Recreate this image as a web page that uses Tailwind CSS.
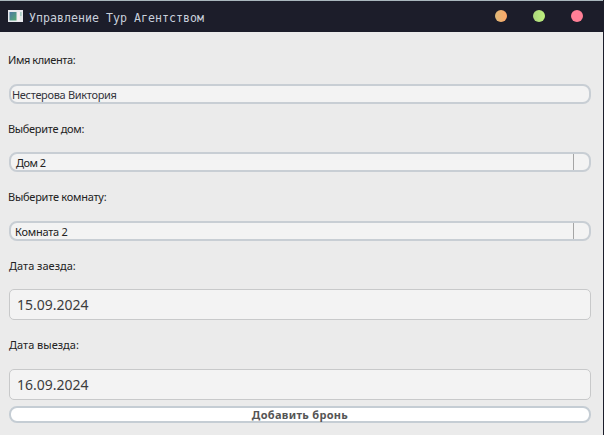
<!DOCTYPE html>
<html lang="ru">
<head>
<meta charset="utf-8">
<title>Управление Тур Агентством</title>
<script src="https://cdn.jsdelivr.net/npm/@tailwindcss/browser@4"></script>
</head>
<body class="w-[604px] h-[435px] overflow-hidden flex bg-[#1c1d2a]">
<div class="w-[603px] h-[435px] flex flex-col bg-[#ebebeb] font-['Noto_Sans',sans-serif] text-[11px] text-[#222]">
  <header class="h-8 shrink-0 flex items-center bg-[#1c1d2a] border-t border-[#a9b7bd] pl-2 pr-5">
    <svg width="15" height="12" viewBox="0 0 15 12" class="shrink-0 -mt-0.5">
      <defs><linearGradient id="g" x1="0" y1="0" x2="1" y2="1"><stop offset="0" stop-color="#4c78a4"/><stop offset="1" stop-color="#55aa72"/></linearGradient></defs>
      <rect width="15" height="12" fill="#e9e9ee"/>
      <rect x="1.5" y="2" width="7" height="8.5" fill="url(#g)"/>
      <rect x="9.5" y="2" width="2" height="9" fill="#f7eef0"/>
      <rect x="12" y="2" width="1.7" height="4" fill="#a9cdc5"/>
      <rect x="12" y="6" width="1.7" height="4" fill="#dce7e4"/>
    </svg>
    <h1 class="ml-1.5 mt-[3px] whitespace-nowrap font-['DejaVu_Sans_Mono',monospace] text-[11.6px] leading-4 tracking-[0.02px] text-[#c9d0dc]">Управление Тур Агентством</h1>
    <div class="ml-auto -mt-0.5 flex gap-[26px]">
      <i class="size-3 rounded-full bg-linear-to-r from-[#dcb878] to-[#ffa768]"></i>
      <i class="size-3 rounded-full bg-linear-to-r from-[#acd67c] to-[#bdf17d]"></i>
      <i class="size-3 rounded-full bg-[#ff7f96]"></i>
    </div>
  </header>
  <main class="flex flex-col pl-[9px] pr-3 pt-5">
    <label class="-ml-px h-4 leading-4 tracking-[-0.4px] whitespace-nowrap">Имя клиента:</label>
    <div class="mt-4 h-5 rounded-[8px] border-2 border-[#c8ced4] bg-[#f3f3f3] pl-px leading-[18px] tracking-[-0.32px] text-[#34343c] whitespace-nowrap">Нестерова Виктория</div>
    <label class="-ml-px mt-[17px] h-4 leading-4 tracking-[-0.32px] whitespace-nowrap">Выберите дом:</label>
    <div class="mt-[15px] h-5 rounded-[8px] border-2 border-[#c8ced4] bg-[#f3f3f3] flex justify-between pl-[5px] pr-[15px]">
      <span class="leading-[18px] tracking-[-0.5px] whitespace-nowrap">Дом 2</span><span class="w-px bg-[#a5a5a5]"></span>
    </div>
    <label class="-ml-px mt-[17px] h-4 leading-4 tracking-[-0.25px] whitespace-nowrap">Выберите комнату:</label>
    <div class="mt-4 h-5 rounded-[8px] border-2 border-[#c8ced4] bg-[#f3f3f3] flex justify-between pl-1 pr-[15px]">
      <span class="leading-[18px] tracking-[-0.25px] whitespace-nowrap">Комната 2</span><span class="w-px bg-[#a5a5a5]"></span>
    </div>
    <label class="mt-[17px] h-4 leading-4 whitespace-nowrap">Дата заезда:</label>
    <div class="mt-[15px] h-[31px] rounded-[5px] border border-[#c8c9ca] bg-[#f3f3f3] pl-[7px] text-[14px] leading-[29px] text-[#3c3c3c]">15.09.2024</div>
    <label class="mt-[17px] h-4 leading-4 whitespace-nowrap">Дата выезда:</label>
    <div class="mt-4 h-[31px] rounded-[5px] border border-[#c8c9ca] bg-[#f3f3f3] pl-[7px] text-[14px] leading-[29px] text-[#3c3c3c]">16.09.2024</div>
    <button class="mt-1.5 h-[17px] rounded-[8px] border-2 border-[#c5cdd4] bg-white leading-[14px] font-bold tracking-[0.3px] text-[#555] whitespace-nowrap">Добавить бронь</button>
  </main>
</div>
</body>
</html>
